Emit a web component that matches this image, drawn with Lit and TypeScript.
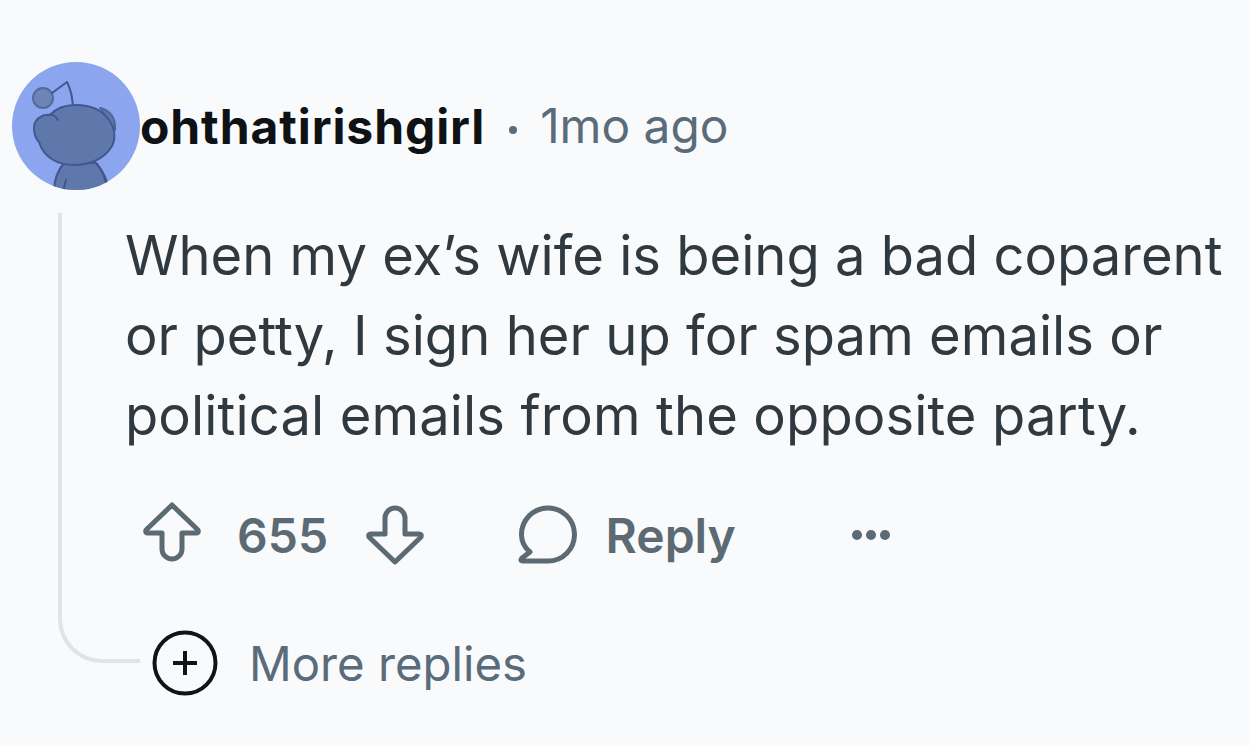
import { LitElement, html, css } from "lit";
import { customElement } from "lit/decorators.js";

@customElement("app-root")
export class AppRoot extends LitElement {
  static styles = css`
    :host { display: block; width: 1250px; height: 746px; background: #f9fafc; overflow: hidden; font-family: Inter, "Liberation Sans", sans-serif; }
    .page { padding: 62px 0 0 12px; }
    .header { display: flex; align-items: center; height: 128px; }
    .avatar { width: 128px; height: 128px; flex: none; display: block; }
    .name { font-size: 48px; font-weight: 700; color: #0f1214; margin-left: 0; letter-spacing: 0.9px; }
    .dot { width: 8px; height: 8px; border-radius: 50%; background: #5a6b7a; margin: 8px 23px 0 24px; }
    .time { font-size: 47.8px; color: #5a6b7a; }
    .thread { display: grid; margin: 23px 0 0 46px; }
    .line { grid-area: 1 / 1; width: 82px; height: 450px; box-sizing: border-box; border-left: 4px solid #dde4ea; border-bottom: 4px solid #dde4ea; border-bottom-left-radius: 44px; }
    .content { grid-area: 1 / 1; padding-left: 68px; }
    .text { margin: 0 0 0 -1px; font-size: 54.3px; line-height: 80px; color: #2f393f; white-space: nowrap; padding-top: 2px; }
    .text span { display: block; }
    .text .l2 { letter-spacing: 0.05px; }
    .text .l3 { letter-spacing: 0.12px; }
    .actions { display: flex; align-items: center; height: 62px; margin-top: 49px; padding-left: 17px; color: #5c6a73; font-size: 48px; font-weight: 600; }
    .actions svg { display: block; flex: none; }
    .up { margin-bottom: 6px; }
    .score { margin: 0 37.5px 0 36px; }
    .bubble { margin-left: 94px; }
    .reply { margin: 0 115px 0 28px; }
    .more { display: flex; align-items: center; height: 66px; margin-top: 64px; padding-left: 26px; }
    .more span { font-size: 47.3px; color: #5a6b7a; margin-left: 31px; }
    .more svg { flex: none; display: block; }
  `;

  render() {
    return html`
      <div class="page">
        <div class="header">
          <svg class="avatar" viewBox="0 0 128 128">
            <defs><clipPath id="c"><circle cx="64" cy="64" r="64"/></clipPath></defs>
            <circle cx="64" cy="64" r="64" fill="#8ba6ee"/>
            <g clip-path="url(#c)" stroke="#42578f" stroke-width="2" fill="#5f78ab" stroke-linejoin="round" stroke-linecap="round">
              <path d="M42 130 C42 116 46 108 52 101 H84 C90 108 96 118 97 130 Z"/>
              <path d="M51 130 L54 118" fill="none"/>
              <path d="M85 102 C90 108 93 116 94 122" fill="none"/>
              <circle cx="31" cy="36" r="10" fill="#6d84b8" stroke="#55699c"/>
              <path d="M40 31 L55 20 C59 28 61 38 61 48" fill="none"/>
              <path d="M88 46 C98 48 104 56 103 68 Z" stroke="#4f659c"/>
              <path d="M22 66 C22 57 30 52 38 53 C46 44 56 43 64 43 C78 43 90 48 97 58 C103 66 104 76 100 84 C92 98 76 103 62 103 C46 103 32 96 27 80 C24 77 22 72 22 66 Z"/>
              <path d="M36 53 C40 52 44 54 46 58" fill="none"/>
            </g>
          </svg>
          <span class="name">ohthatirishgirl</span>
          <span class="dot"></span>
          <span class="time">1mo ago</span>
        </div>
        <div class="thread">
          <div class="line"></div>
          <div class="content">
            <p class="text"><span>When my ex’s wife is being a bad coparent</span><span class="l2">or petty, I sign her up for spam emails or</span><span class="l3">political emails from the opposite party.</span></p>
            <div class="actions">
              <svg class="up" width="58" height="60" viewBox="0 0 58 60" fill="none" stroke="#5c6a73" stroke-width="5" stroke-linejoin="round" stroke-linecap="round"><path d="M29 3 L55 28 Q56 31 53 31 H39 V47 A10 10 0 0 1 19 47 V31 H5 Q2 31 3 28 Z"/></svg>
              <span class="score">655</span>
              <svg width="58" height="60" viewBox="0 0 58 60" fill="none" stroke="#5c6a73" stroke-width="5" stroke-linejoin="round" stroke-linecap="round"><path d="M29 57 L55 32 Q56 29 53 29 H39 V13 A10 10 0 0 0 19 13 V29 H5 Q2 29 3 32 Z"/></svg>
              <svg class="bubble" width="60" height="60" viewBox="0 0 60 60" fill="none" stroke="#5c6a73" stroke-width="5" stroke-linejoin="round"><path d="M30 56 H5 Q1.5 56 4 53 L12 47 C6 42 3.5 36 3.5 30 A26.5 26.5 0 1 1 30 56 Z"/></svg>
              <span class="reply">Reply</span>
              <svg width="40" height="12" viewBox="0 0 40 12" fill="#5c6a73"><circle cx="6" cy="6" r="5"/><circle cx="20" cy="6" r="5"/><circle cx="34" cy="6" r="5"/></svg>
            </div>
            <div class="more">
              <svg width="66" height="66" viewBox="0 0 66 66" fill="none" stroke="#111416"><circle cx="33" cy="33" r="30.5" stroke-width="4"/><path d="M21 33 H45 M33 21 V45" stroke-width="4"/></svg>
              <span>More replies</span>
            </div>
          </div>
        </div>
      </div>
    `;
  }
}
